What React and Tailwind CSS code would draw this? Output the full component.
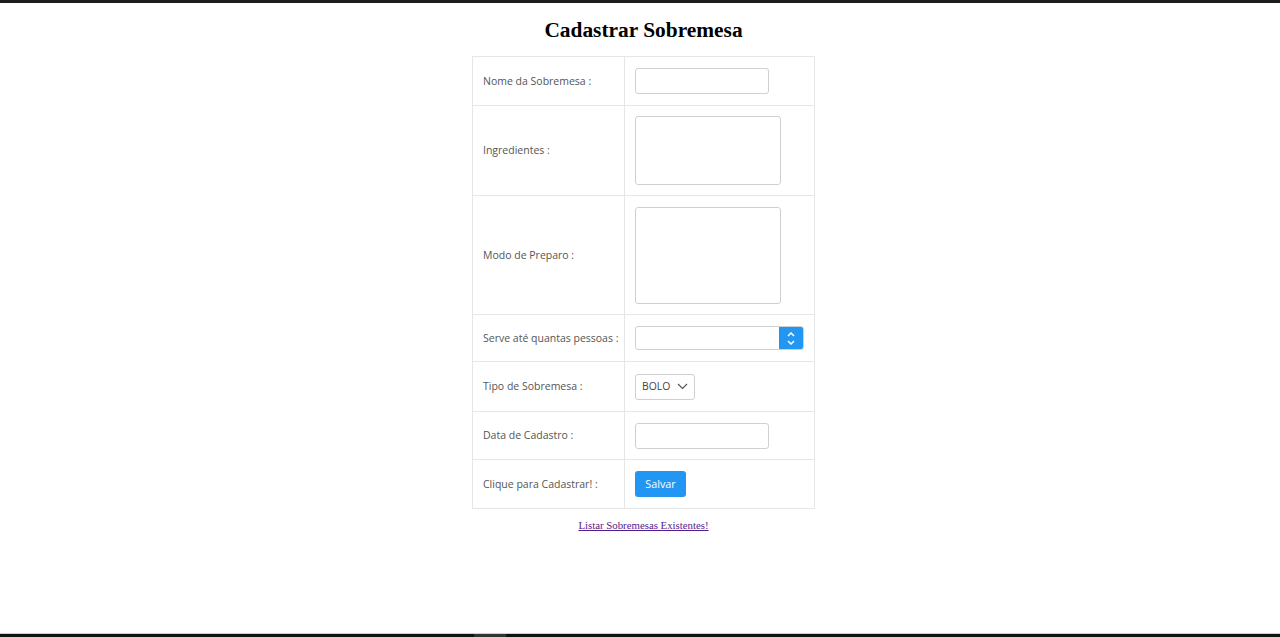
export default function App() {
  const label = "px-[10px] pt-px flex items-center border-r border-[#e6e6e6] text-[10.5px] text-[#555] whitespace-nowrap";
  const cell = "px-[10px] flex items-center";
  const row = "grid grid-cols-[152px_1fr] border-b border-[#e6e6e6]";
  const inputCls = "border border-[#d0d0d0] rounded-[3px] bg-white";
  return (
    <div className="w-[1280px] h-[637px] bg-white flex flex-col overflow-hidden" style={{ fontFamily: '"Open Sans", "Noto Sans", sans-serif' }}>
      <div className="h-[3px] bg-[#1c1c1c] shrink-0" />
      <div className="pl-[7px] flex flex-col">
        <h1 className="text-center text-[21.4px] font-bold text-black mt-[14px] leading-[26px]" style={{ fontFamily: '"Liberation Serif", serif' }}>
          Cadastrar Sobremesa
        </h1>
        <div className="mx-auto mt-[13px] w-[343px] border border-[#e6e6e6] border-b-0">
          <div className={`${row} h-[49px]`}>
            <div className={label}>Nome da Sobremesa :</div>
            <div className={cell}><div className={`${inputCls} w-[134px] h-[26px]`} /></div>
          </div>
          <div className={`${row} h-[90px]`}>
            <div className={label}>Ingredientes :</div>
            <div className={cell}><div className={`${inputCls} w-[146px] h-[69px]`} /></div>
          </div>
          <div className={`${row} h-[119px]`}>
            <div className={label}>Modo de Preparo :</div>
            <div className={cell}><div className={`${inputCls} w-[146px] h-[97px]`} /></div>
          </div>
          <div className={`${row} h-[47px]`}>
            <div className={label}>Serve até quantas pessoas :</div>
            <div className={cell}>
              <div className={`${inputCls} w-[169px] h-[24px] flex justify-end overflow-hidden`}>
                <div className="w-[24px] h-full bg-[#2196f3] flex flex-col items-center justify-center gap-[3px]">
                  <svg width="8" height="5" viewBox="0 0 8 5"><path d="M1 4 L4 1 L7 4" stroke="white" strokeWidth="1.5" fill="none" /></svg>
                  <svg width="8" height="5" viewBox="0 0 8 5"><path d="M1 1 L4 4 L7 1" stroke="white" strokeWidth="1.5" fill="none" /></svg>
                </div>
              </div>
            </div>
          </div>
          <div className={`${row} h-[50px]`}>
            <div className={label}>Tipo de Sobremesa :</div>
            <div className={cell}>
              <div className={`${inputCls} w-[60px] h-[26px] flex items-center pl-[6px] gap-[7px] text-[10.4px] text-[#444]`}>
                <span>BOLO</span>
                <svg width="11" height="7" viewBox="0 0 11 7"><path d="M1 1 L5.5 5.5 L10 1" stroke="#555" strokeWidth="1.2" fill="none" /></svg>
              </div>
            </div>
          </div>
          <div className={`${row} h-[48px]`}>
            <div className={label}>Data de Cadastro :</div>
            <div className={cell}><div className={`${inputCls} w-[134px] h-[26px]`} /></div>
          </div>
          <div className={`${row} h-[49px]`}>
            <div className={label}>Clique para Cadastrar! :</div>
            <div className={cell}>
              <div className="w-[51px] h-[26px] rounded-[3px] bg-[#2196f3] text-white text-[10.8px] flex items-center justify-center">Salvar</div>
            </div>
          </div>
        </div>
        <div className="text-center mt-0 leading-[28px]">
          <a href="#" className="text-[10.8px] text-[#551a8b] underline" style={{ fontFamily: '"Liberation Serif", serif' }}>
            Listar Sobremesas Existentes!
          </a>
        </div>
      </div>
      <div className="flex-1" />
      <div className="h-px bg-[#cfcfcf] shrink-0" />
      <div className="h-[3px] bg-[#111] shrink-0 flex">
        <div className="w-[474px]" />
        <div className="w-[32px] bg-[#333]" />
      </div>
    </div>
  );
}
